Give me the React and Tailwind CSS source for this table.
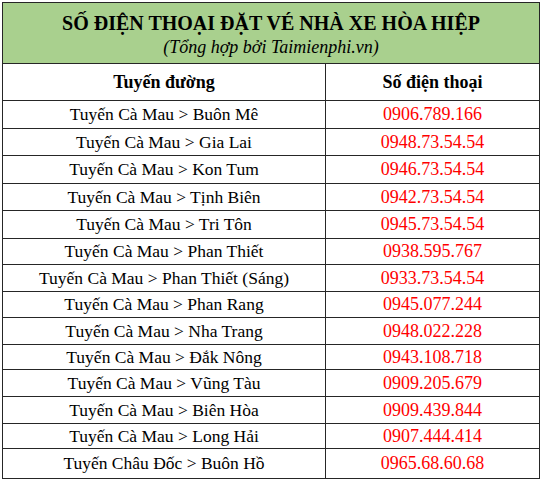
const rows = [
  ["Tuyến Cà Mau > Buôn Mê", "0906.789.166", 28],
  ["Tuyến Cà Mau > Gia Lai", "0948.73.54.54", 27],
  ["Tuyến Cà Mau > Kon Tum", "0946.73.54.54", 28],
  ["Tuyến Cà Mau > Tịnh Biên", "0942.73.54.54", 27],
  ["Tuyến Cà Mau > Tri Tôn", "0945.73.54.54", 28],
  ["Tuyến Cà Mau > Phan Thiết", "0938.595.767", 26],
  ["Tuyến Cà Mau > Phan Thiết (Sáng)", "0933.73.54.54", 27],
  ["Tuyến Cà Mau > Phan Rang", "0945.077.244", 26],
  ["Tuyến Cà Mau > Nha Trang", "0948.022.228", 27],
  ["Tuyến Cà Mau > Đắk Nông", "0943.108.718", 25],
  ["Tuyến Cà Mau > Vũng Tàu", "0909.205.679", 27],
  ["Tuyến Cà Mau > Biên Hòa", "0909.439.844", 27],
  ["Tuyến Cà Mau > Long Hải", "0907.444.414", 25],
  ["Tuyến Châu Đốc > Buôn Hồ", "0965.68.60.68", 29],
];

export default function App() {
  return (
    <div className="w-[542px] h-[480px] bg-white pt-[2px] pl-[2px] font-['Liberation_Serif',serif] text-black">
      <div className="w-[538px] border-[1.5px] border-[#262626]">
        <div className="h-[61px] pt-[3px] bg-[#a9d08e] border-b-[1.5px] border-[#262626] flex flex-col items-center justify-center">
          <div className="text-[20px] font-bold leading-[25px]">SỐ ĐIỆN THOẠI ĐẶT VÉ NHÀ XE HÒA HIỆP</div>
          <div className="text-[18px] italic leading-[23px]">(Tổng hợp bởi Taimienphi.vn)</div>
        </div>
        <div className="flex h-[37px] border-b-[1.5px] border-[#262626] font-bold text-[18px]">
          <div className="w-[323px] border-r-[1.5px] border-[#262626] flex items-center justify-center">Tuyến đường</div>
          <div className="flex-1 flex items-center justify-center">Số điện thoại</div>
        </div>
        {rows.map(([route, phone, h], i) => (
          <div
            key={i}
            className={`flex ${i < rows.length - 1 ? "border-b-[1.5px] border-[#262626]" : ""}`}
            style={{ height: h }}
          >
            <div className="w-[323px] border-r-[1.5px] border-[#262626] flex items-center justify-center text-[17.5px]">{route}</div>
            <div className="flex-1 flex items-center justify-center text-[18px] text-[#ff0000]">{phone}</div>
          </div>
        ))}
      </div>
    </div>
  );
}
